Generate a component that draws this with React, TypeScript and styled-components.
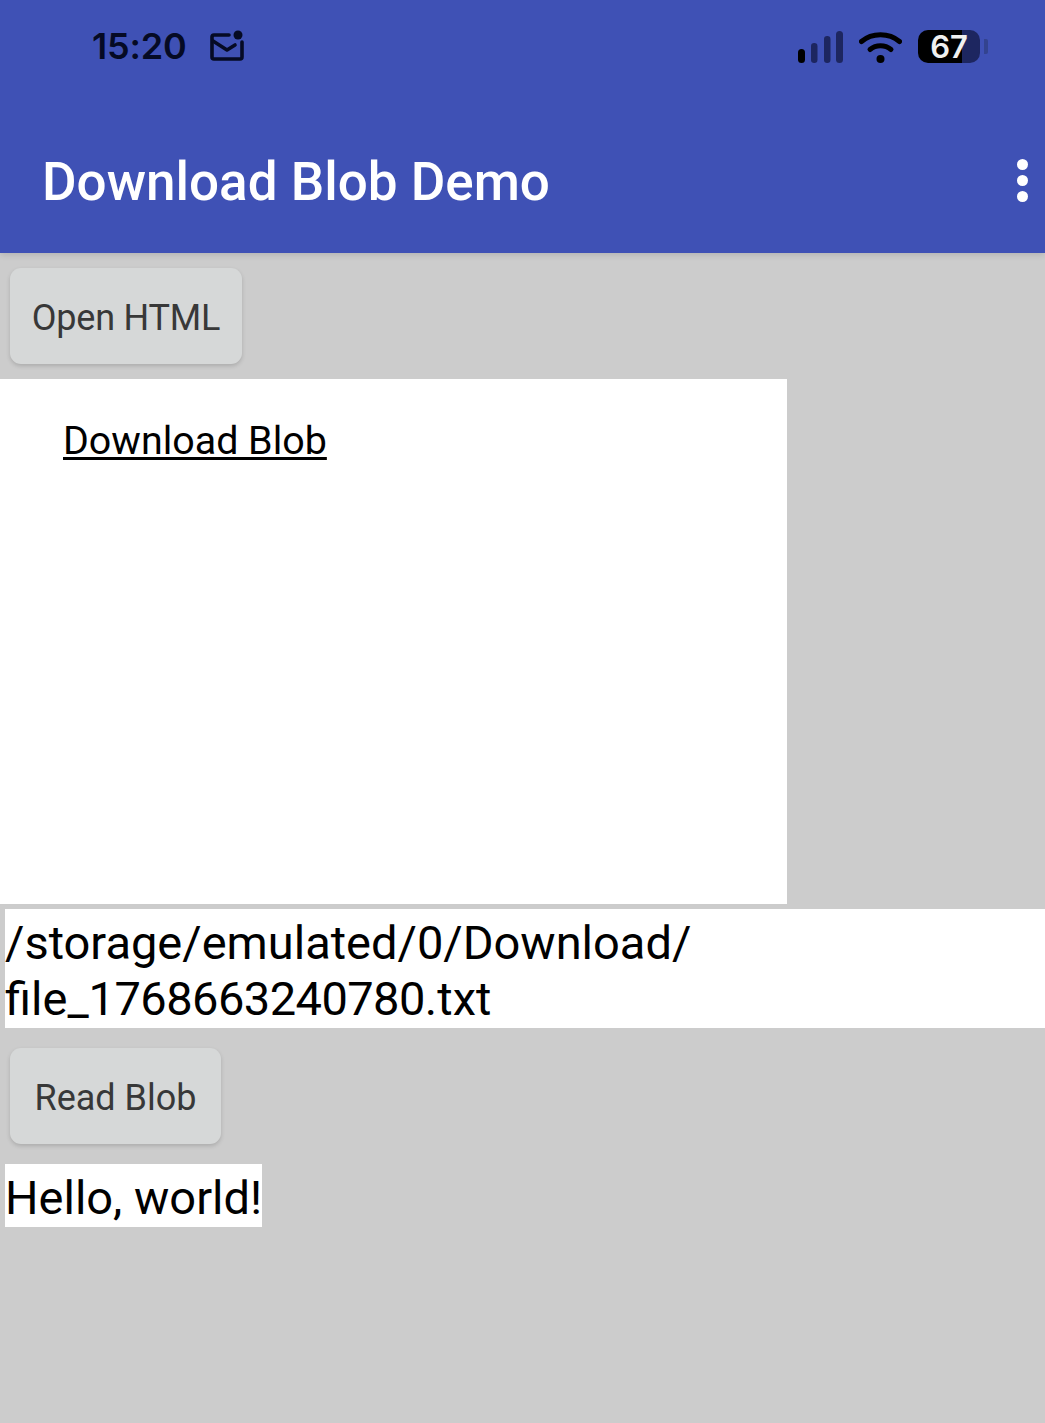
import React from "react";
import styled, { createGlobalStyle } from "styled-components";

const GlobalStyle = createGlobalStyle`
  html, body {
    margin: 0;
    padding: 0;
    background: #cccccc;
    font-family: Roboto, "Liberation Sans", sans-serif;
  }
`;

const Page = styled.div`
  width: 1045px;
  height: 1423px;
  overflow: hidden;
  display: flex;
  flex-direction: column;
  background: #cccccc;
`;

const Header = styled.header`
  height: 253px;
  flex: none;
  background: #3f51b5;
  box-shadow: 0 2px 6px rgba(0, 0, 0, 0.12);
  display: flex;
  flex-direction: column;
`;

const StatusBar = styled.div`
  height: 92px;
  display: flex;
  align-items: flex-start;
  justify-content: space-between;
  padding: 25px 57px 0 92px;
  box-sizing: border-box;
`;

const StatusGroup = styled.div<{ $top?: number }>`
  display: flex;
  align-items: center;
  padding-top: ${(p) => p.$top ?? 0}px;
`;

const Time = styled.span`
  font-family: Inter, Roboto, sans-serif;
  font-size: 36px;
  line-height: 42px;
  font-weight: 600;
  color: #050a24;
  letter-spacing: -0.2px;
`;

const Battery = styled.div<{ $level: number }>`
  width: 62px;
  height: 33px;
  border-radius: 10px;
  background: linear-gradient(
    to right,
    #000 ${(p) => p.$level}%,
    #1d2660 ${(p) => p.$level}%
  );
  color: #f0f0f0;
  font-family: Inter, "Open Sans", sans-serif;
  font-size: 31px;
  font-weight: 600;
  line-height: 33px;
  text-align: center;
  box-sizing: border-box;
`;

const BatteryCap = styled.div`
  width: 4px;
  height: 15px;
  margin-left: 4px;
  border-radius: 0 2px 2px 0;
  background: #33438f;
`;

const Toolbar = styled.div`
  flex: 1;
  display: flex;
  align-items: flex-start;
  justify-content: space-between;
  padding: 56px 17px 0 42px;
`;

const Title = styled.h1`
  margin: 0;
  font-size: 53px;
  line-height: 68px;
  font-weight: 500;
  color: #fff;
`;

const Overflow = styled.div`
  display: flex;
  flex-direction: column;
  gap: 5px;
  padding-top: 11px;
`;

const Dot = styled.span`
  width: 11px;
  height: 11px;
  border-radius: 50%;
  background: #fff;
`;

const Content = styled.main`
  display: flex;
  flex-direction: column;
  align-items: flex-start;
`;

const ActionButton = styled.button<{ $width: number; $top: number; $bottom: number; $tracking?: number }>`
  width: ${(p) => p.$width}px;
  height: 96px;
  margin: ${(p) => p.$top}px 0 ${(p) => p.$bottom}px 10px;
  padding: 4px 0 0;
  border: none;
  border-radius: 11px;
  background: #d6d8d8;
  color: #383838;
  font-family: Roboto, sans-serif;
  font-size: 36px;
  letter-spacing: ${(p) => p.$tracking ?? 0}px;
  box-shadow: 0 2px 4px rgba(0, 0, 0, 0.16);
`;

const Frame = styled.div`
  width: 787px;
  height: 525px;
  background: #fff;
  padding: 37px 0 0 63px;
  box-sizing: border-box;
`;

const BlobLink = styled.a`
  color: #000;
  font-size: 39.4px;
  line-height: 50px;
  text-decoration: underline;
  text-decoration-thickness: 3px;
  text-underline-offset: 3px;
`;

const PathBox = styled.div`
  width: 1040px;
  margin: 5px 0 20px 5px;
  background: #fff;
  color: #000;
  font-size: 47px;
  line-height: 56px;
  padding: 6px 0 1px;
  box-sizing: border-box;
`;

const Digits = styled.span`
  letter-spacing: -0.55px;
`;

const ResultBox = styled.div`
  margin-left: 5px;
  width: 257px;
  height: 63px;
  background: #fff;
  color: #000;
  font-size: 47px;
  line-height: 67px;
  box-sizing: border-box;
  white-space: nowrap;
`;

const MailIcon = () => (
  <svg width="36" height="32" viewBox="0 0 36 32" style={{ marginLeft: 22 }} fill="none">
    <path
      d="M20 5H5a2 2 0 0 0-2 2v20a2 2 0 0 0 2 2h26a2 2 0 0 0 2-2V12"
      stroke="#050a24"
      strokeWidth="3.6"
      strokeLinecap="round"
    />
    <path d="M4 11l14 9 8-5" stroke="#050a24" strokeWidth="3.6" strokeLinecap="round" strokeLinejoin="round" />
    <circle cx="29" cy="5" r="4.5" fill="#050a24" />
  </svg>
);

const SignalIcon = () => (
  <svg width="45" height="32" viewBox="0 0 45 32">
    <rect x="0" y="18" width="7" height="14" rx="3.5" fill="#000" />
    <rect x="13" y="12" width="6.5" height="20" rx="3.2" fill="#1d2660" />
    <rect x="26" y="5" width="6.5" height="27" rx="3.2" fill="#1d2660" />
    <rect x="38" y="0" width="7" height="32" rx="3.5" fill="#1d2660" />
  </svg>
);

const WifiIcon = () => (
  <svg width="43" height="32" viewBox="0 0 43 32" fill="none" style={{ margin: "0 16px" }}>
    <path d="M2.5 10.5C13 1.5 30 1.5 40.5 10.5" stroke="#000" strokeWidth="5" strokeLinecap="round" />
    <path d="M11 18.5C17 13.5 26 13.5 32 18.5" stroke="#000" strokeWidth="5" strokeLinecap="round" />
    <circle cx="21.5" cy="28" r="4" fill="#000" />
  </svg>
);

export default function App() {
  return (
    <Page>
      <GlobalStyle />
      <Header>
        <StatusBar>
          <StatusGroup>
            <Time>15:20</Time>
            <MailIcon />
          </StatusGroup>
          <StatusGroup $top={5}>
            <SignalIcon />
            <WifiIcon />
            <Battery $level={71}>67</Battery>
            <BatteryCap />
          </StatusGroup>
        </StatusBar>
        <Toolbar>
          <Title>Download Blob Demo</Title>
          <Overflow>
            <Dot />
            <Dot />
            <Dot />
          </Overflow>
        </Toolbar>
      </Header>
      <Content>
        <ActionButton $width={232} $top={15} $bottom={15} $tracking={-0.2}>Open HTML</ActionButton>
        <Frame>
          <BlobLink href="#">Download Blob</BlobLink>
        </Frame>
        <PathBox>
          /storage/emulated/0/Download/
          <br />
          file_<Digits>1768663240780</Digits>.txt
        </PathBox>
        <ActionButton $width={211} $top={0} $bottom={20}>Read Blob</ActionButton>
        <ResultBox>Hello, world!</ResultBox>
      </Content>
    </Page>
  );
}
